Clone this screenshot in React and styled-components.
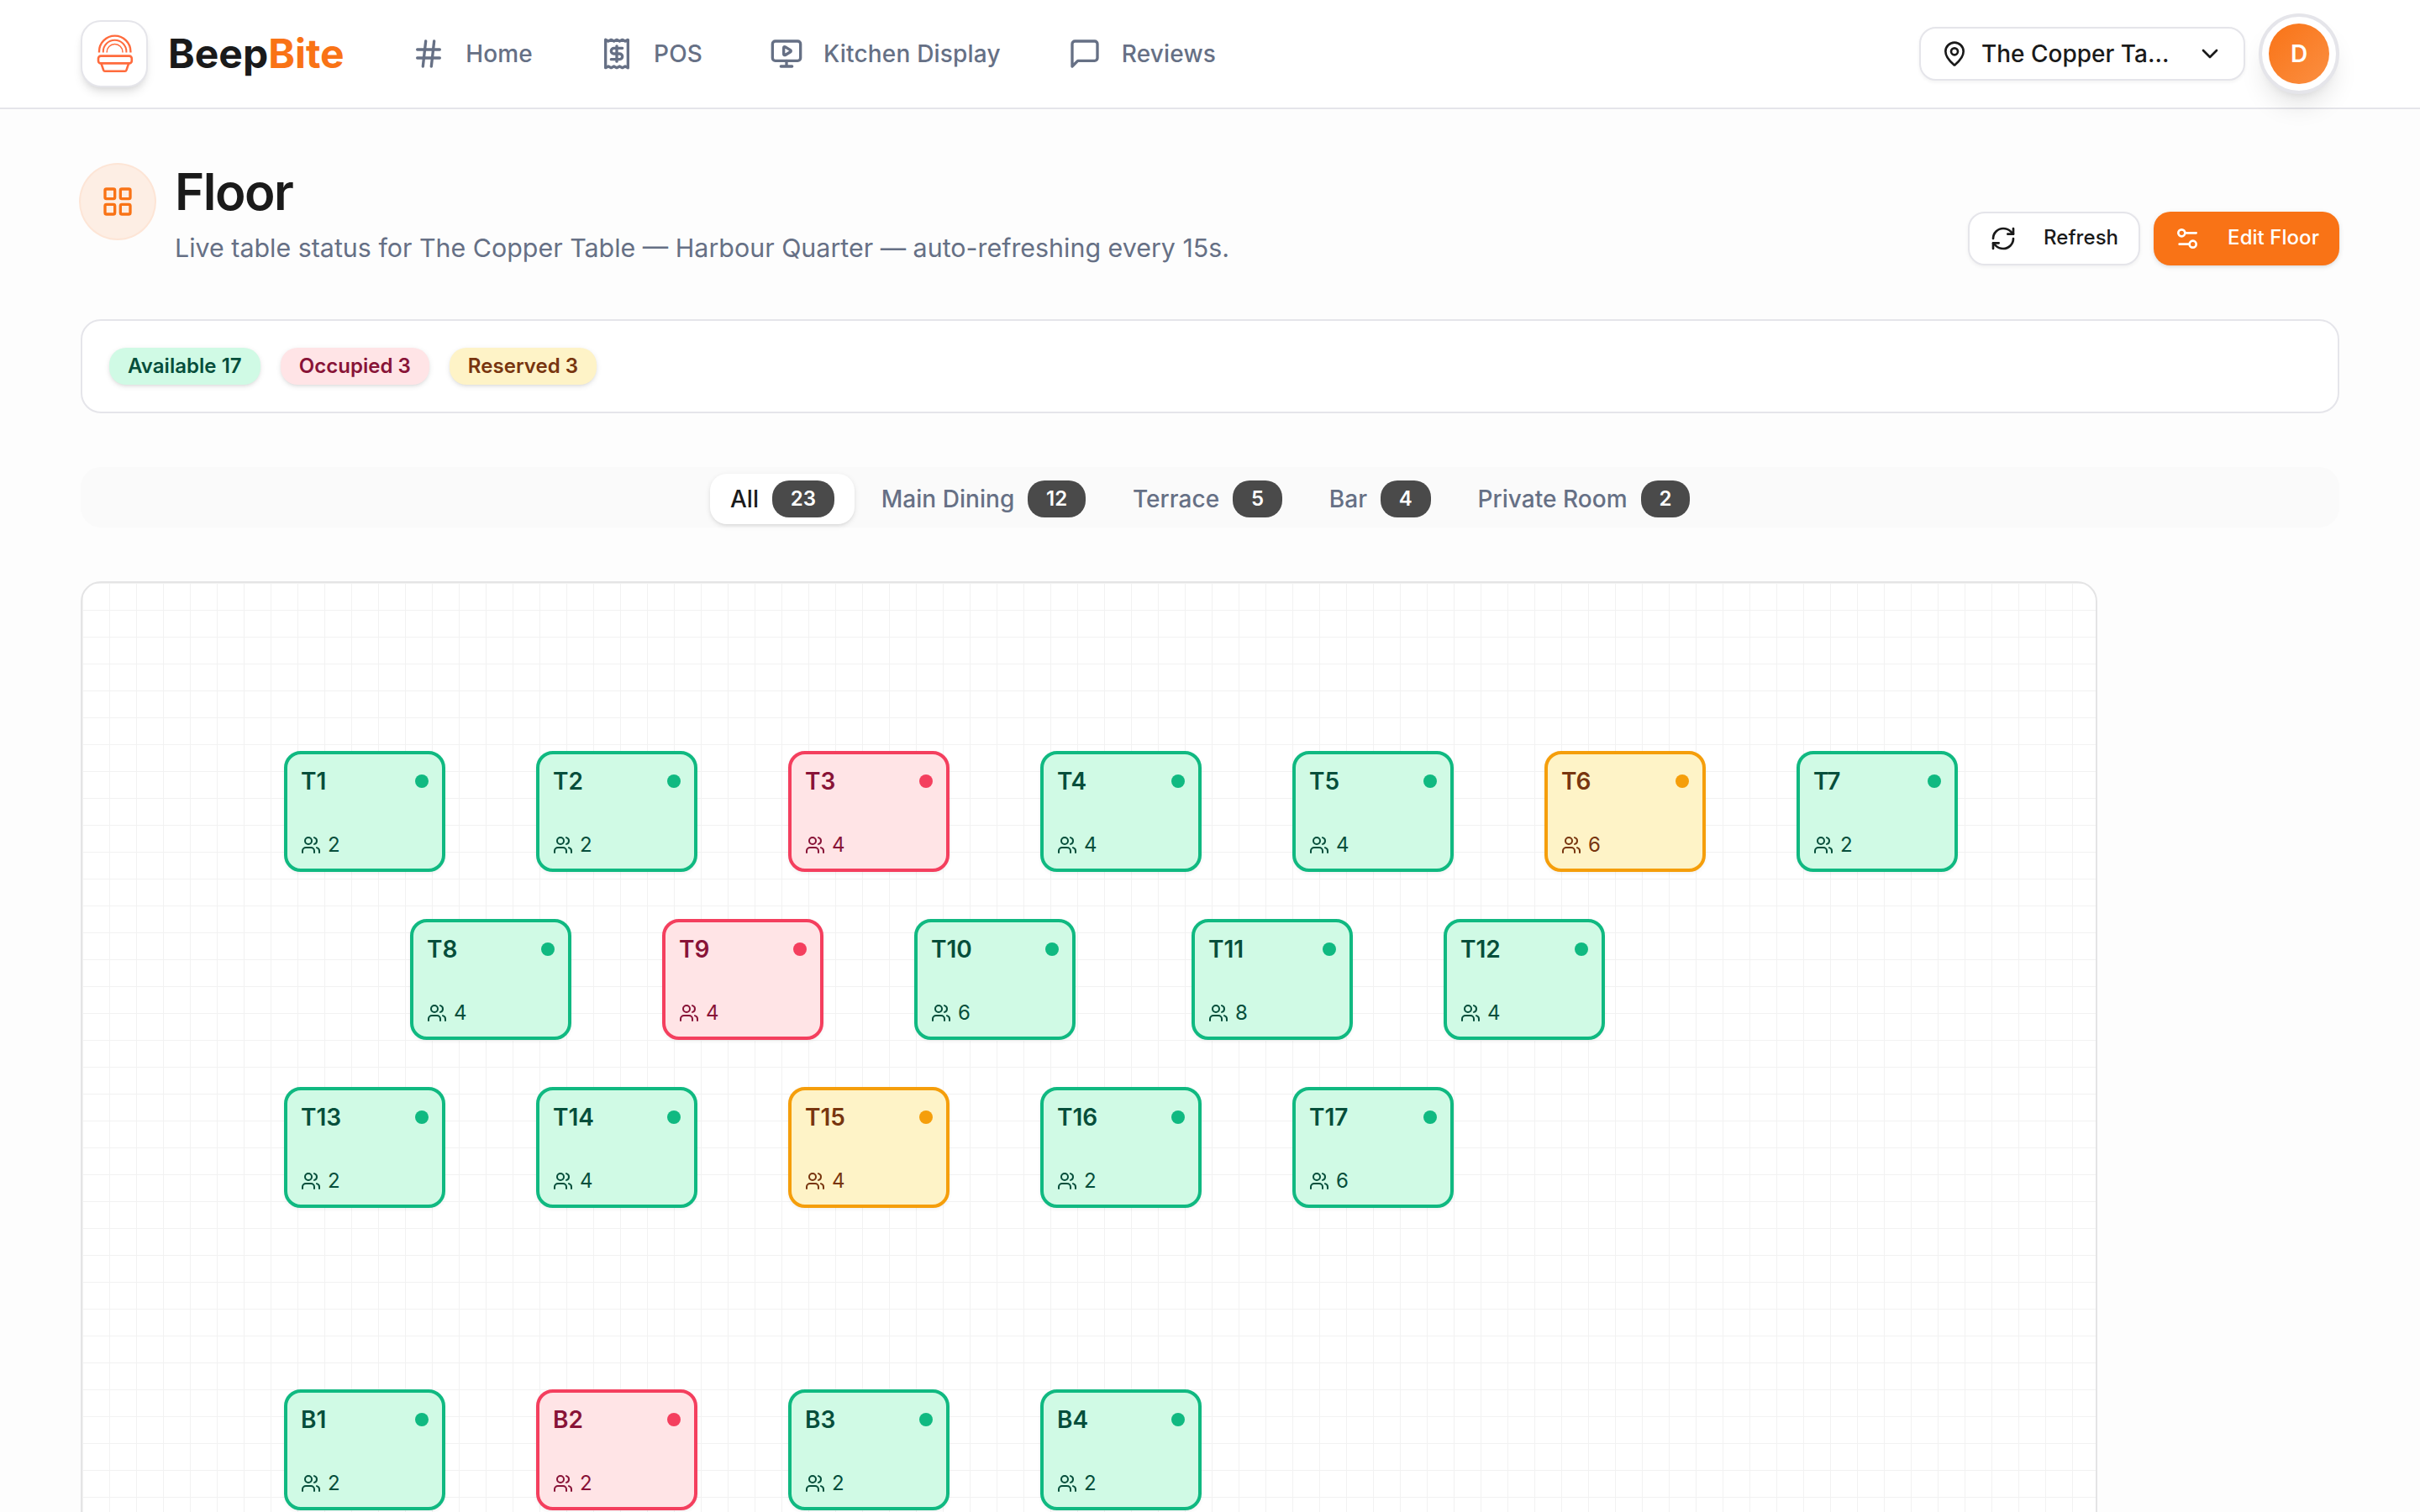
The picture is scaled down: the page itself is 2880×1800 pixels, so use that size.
import React, { useState } from "react";
import styled, { createGlobalStyle, css } from "styled-components";

const GlobalStyle = createGlobalStyle`
  * {
    box-sizing: border-box;
  }
  body {
    margin: 0;
    background: #fdfdfd;
    color: #1a1a1a;
    font-family: Inter, "Liberation Sans", sans-serif;
    -webkit-font-smoothing: antialiased;
  }
  button {
    font-family: inherit;
    cursor: pointer;
  }
`;

const STATUS = {
  available: { bg: "#d0fae5", border: "#10b981", text: "#064e3b" },
  occupied: { bg: "#ffe4e6", border: "#f43f5e", text: "#881337" },
  reserved: { bg: "#fef3c7", border: "#f59e0b", text: "#78350f" },
};

const Page = styled.div`
  height: 100vh;
  overflow: hidden;
`;

const Header = styled.header`
  display: flex;
  align-items: center;
  height: 130px;
  padding: 0 96px;
  background: #fff;
  border-bottom: 2px solid #e5e5ea;
`;

const LogoTile = styled.div`
  display: flex;
  align-items: center;
  justify-content: center;
  width: 80px;
  height: 80px;
  margin-right: 24px;
  border: 2px solid #e5e5ea;
  border-radius: 24px;
  background: #fff;
  box-shadow: 0 8px 12px -2px rgba(0, 0, 0, 0.1),
    0 4px 8px -4px rgba(0, 0, 0, 0.1);
`;

const Brand = styled.span`
  font-size: 48px;
  font-weight: 700;
  line-height: 64px;
  span {
    color: #f97316;
  }
`;

const Nav = styled.nav`
  display: flex;
  gap: 80px;
  margin-left: 80.5px;
`;

const NavItem = styled.a`
  display: flex;
  align-items: center;
  gap: 24px;
  color: #667085;
  font-size: 28px;
  font-weight: 500;
  line-height: 40px;
  letter-spacing: 0.18px;
`;

const HeaderRight = styled.div`
  display: flex;
  align-items: center;
  gap: 16px;
  margin-left: auto;
`;

const LocationSelect = styled.button`
  display: flex;
  align-items: center;
  gap: 16px;
  width: 388px;
  height: 64px;
  padding: 0 24px;
  border: 2px solid #e5e5ea;
  border-radius: 20px;
  background: #fff;
  color: #1a1a1a;
  font-size: 28px;
  font-weight: 500;
  box-shadow: 0 2px 4px rgba(0, 0, 0, 0.05);
  svg:last-child {
    margin-left: auto;
  }
`;

const AvatarRing = styled.div`
  display: flex;
  align-items: center;
  justify-content: center;
  width: 96px;
  height: 96px;
  border: 4px solid #e5e5ea;
  border-radius: 50%;
  background: #fff;
  box-shadow: 0 20px 30px -6px rgba(0, 0, 0, 0.1),
    0 8px 12px -8px rgba(0, 0, 0, 0.1);
`;

const Avatar = styled.div`
  display: flex;
  align-items: center;
  justify-content: center;
  width: 72px;
  height: 72px;
  border-radius: 50%;
  background: linear-gradient(135deg, #f97316, #fb8f42);
  color: #fff;
  font-size: 28px;
  font-weight: 600;
`;

const Main = styled.main`
  display: flex;
  flex-direction: column;
  padding: 62px 96px 0;
`;

const TitleRow = styled.div`
  display: flex;
  align-items: flex-end;
  justify-content: space-between;
  height: 124px;
`;

const TitleGroup = styled.div`
  display: flex;
  align-items: flex-start;
  gap: 24px;
  height: 100%;
`;

const TitleIcon = styled.div`
  display: flex;
  align-items: center;
  justify-content: center;
  width: 88px;
  height: 88px;
  margin-top: 4px;
  border-radius: 50%;
  background: #fdeee4;
  color: #f97316;
  box-shadow: 0 0 0 2px #fde5d6;
`;

const Title = styled.h1`
  margin: 0;
  font-size: 60px;
  font-weight: 600;
  line-height: 72px;
  letter-spacing: -1.5px;
`;

const Subtitle = styled.p`
  margin: 8px 0 0;
  color: #667085;
  font-size: 30.4px;
  line-height: 46px;
`;

const Actions = styled.div`
  display: flex;
  gap: 16px;
`;

const ActionButton = styled.button`
  display: flex;
  align-items: center;
  gap: 32px;
  height: 64px;
  padding: 0 24px;
  border: 2px solid #e5e5ea;
  border-radius: 20px;
  background: #fff;
  color: #1a1a1a;
  font-size: 24px;
  font-weight: 500;
  line-height: 32px;
  letter-spacing: 0.05px;
  box-shadow: 0 2px 4px rgba(0, 0, 0, 0.05);
  ${(props) =>
    props.$primary &&
    css`
      border: 0;
      background: #f97316;
      color: #fff;
      box-shadow: 0 2px 6px rgba(0, 0, 0, 0.1), 0 2px 4px -2px rgba(0, 0, 0, 0.1);
    `}
`;

const ActionLabel = styled.span`
  padding-bottom: 2px;
`;

const SummaryCard = styled.section`
  display: flex;
  gap: 24px;
  margin-top: 64px;
  padding: 32px;
  border: 2px solid #e5e5ea;
  border-radius: 24px;
  background: #fff;
`;

const StatusBadge = styled.span`
  height: 44px;
  padding: 0 22px;
  border-radius: 20px;
  background: ${(props) => STATUS[props.$status].bg};
  color: ${(props) => STATUS[props.$status].text};
  font-size: 24px;
  font-weight: 600;
  line-height: 44px;
  letter-spacing: 0.03px;
  box-shadow: 0 2px 6px rgba(0, 0, 0, 0.1), 0 2px 4px -2px rgba(0, 0, 0, 0.1);
`;

const Tabs = styled.div`
  display: flex;
  justify-content: center;
  gap: 8px;
  height: 72px;
  margin-top: 64px;
  padding-top: 8px;
  border-radius: 24px;
  background: #fafafa;
`;

const Tab = styled.button`
  display: flex;
  align-items: center;
  gap: 16px;
  height: 60px;
  padding: 0 24px;
  border: 0;
  border-radius: 20px;
  background: ${(props) => (props.$active ? "#fff" : "transparent")};
  color: ${(props) => (props.$active ? "#1a1a1a" : "#667085")};
  font-size: 28px;
  font-weight: 500;
  letter-spacing: 0.04px;
  box-shadow: ${(props) =>
    props.$active
      ? "0 2px 6px rgba(0, 0, 0, 0.1), 0 2px 4px -2px rgba(0, 0, 0, 0.1)"
      : "none"};
`;

const TabCount = styled.span`
  height: 44px;
  padding: 0 21.75px;
  border-radius: 20px;
  background: #4a4a4a;
  color: #fff;
  font-size: 24px;
  font-weight: 600;
  line-height: 44px;
  letter-spacing: 0;
`;

const FloorCanvas = styled.div`
  position: relative;
  width: 2400px;
  height: 1604px;
  margin-top: 64px;
  border: 2px solid #e4e4e5;
  border-radius: 24px;
  background-color: #fff;
  background-image: linear-gradient(to right, #f2f2f2 1px, transparent 1px),
    linear-gradient(to bottom, #f2f2f2 1px, transparent 1px);
  background-size: 32px 32px;
`;

const TableTile = styled.div`
  position: absolute;
  display: flex;
  flex-direction: column;
  justify-content: space-between;
  width: 192px;
  height: 144px;
  padding: 12px 16px;
  border: 4px solid ${(props) => STATUS[props.$status].border};
  border-radius: 20px;
  background: ${(props) => STATUS[props.$status].bg};
  color: ${(props) => STATUS[props.$status].text};
  box-shadow: 0 2px 4px rgba(0, 0, 0, 0.05);
`;

const TileTop = styled.div`
  display: flex;
  align-items: center;
  justify-content: space-between;
  font-size: 28px;
  font-weight: 600;
  line-height: 40px;
`;

const Dot = styled.span`
  width: 16px;
  height: 16px;
  border-radius: 50%;
  background: ${(props) => STATUS[props.$status].border};
`;

const Seats = styled.div`
  display: flex;
  align-items: center;
  gap: 8px;
  font-size: 24px;
  line-height: 32px;
`;

const StrokeSvg = styled.svg`
  flex-shrink: 0;
  fill: none;
  stroke: currentColor;
  stroke-width: 2;
  stroke-linecap: round;
  stroke-linejoin: round;
`;

const Icon = ({ size = 32, children }) => (
  <StrokeSvg width={size} height={size} viewBox="0 0 24 24">
    {children}
  </StrokeSvg>
);

const BurgerLogo = () => (
  <svg width="48" height="48" viewBox="0 0 48 48" fill="none" stroke="#ff6b3d">
    <path d="M6 22.5v-1.2a18.7 18.7 0 0 1 37.4 0v1.2" strokeWidth="2.4" />
    <path d="M10.8 22.5v-1a13.8 13.8 0 0 1 27.6 0v1" strokeWidth="2" />
    <path d="M15.2 22.5v-.6a9.4 9.4 0 0 1 18.8 0v.6" strokeWidth="1.5" />
    <rect x="5" y="26.6" width="39.8" height="8.8" rx="3" strokeWidth="2.6" />
    <path
      d="M8.4 35.4l2.8 8.2q.4 1.1 1.6 1.1h24q1.2 0 1.6-1.1l2.8-8.2"
      strokeWidth="2.6"
    />
  </svg>
);

const navItems = [
  {
    label: "Home",
    icon: <path d="M4 9h16M4 15h16M10 3 8 21M16 3l-2 18" />,
  },
  {
    label: "POS",
    icon: (
      <>
        <path d="M4 2v20l2-1 2 1 2-1 2 1 2-1 2 1 2-1 2 1V2l-2 1-2-1-2 1-2-1-2 1-2-1-2 1Z" />
        <path d="M16 8h-6a2 2 0 1 0 0 4h4a2 2 0 1 1 0 4H8" />
        <path d="M12 17.5v-11" />
      </>
    ),
  },
  {
    label: "Kitchen Display",
    icon: (
      <>
        <path d="M10 7.75a.75.75 0 0 1 1.142-.638l3.664 2.249a.75.75 0 0 1 0 1.278l-3.664 2.25a.75.75 0 0 1-1.142-.64z" />
        <path d="M12 17v4M8 21h8" />
        <rect x="2" y="3" width="20" height="14" rx="2" />
      </>
    ),
  },
  {
    label: "Reviews",
    icon: (
      <path d="M21 15a2 2 0 0 1-2 2H7l-4 4V5a2 2 0 0 1 2-2h14a2 2 0 0 1 2 2z" />
    ),
  },
];

const summary = [
  { status: "available", label: "Available 17" },
  { status: "occupied", label: "Occupied 3" },
  { status: "reserved", label: "Reserved 3" },
];

const sections = [
  { name: "All", count: 23 },
  { name: "Main Dining", count: 12 },
  { name: "Terrace", count: 5 },
  { name: "Bar", count: 4 },
  { name: "Private Room", count: 2 },
];

const tables = [
  { name: "T1", x: 240, y: 200, seats: 2, status: "available" },
  { name: "T2", x: 540, y: 200, seats: 2, status: "available" },
  { name: "T3", x: 840, y: 200, seats: 4, status: "occupied" },
  { name: "T4", x: 1140, y: 200, seats: 4, status: "available" },
  { name: "T5", x: 1440, y: 200, seats: 4, status: "available" },
  { name: "T6", x: 1740, y: 200, seats: 6, status: "reserved" },
  { name: "T7", x: 2040, y: 200, seats: 2, status: "available" },
  { name: "T8", x: 390, y: 400, seats: 4, status: "available" },
  { name: "T9", x: 690, y: 400, seats: 4, status: "occupied" },
  { name: "T10", x: 990, y: 400, seats: 6, status: "available" },
  { name: "T11", x: 1320, y: 400, seats: 8, status: "available" },
  { name: "T12", x: 1620, y: 400, seats: 4, status: "available" },
  { name: "T13", x: 240, y: 600, seats: 2, status: "available" },
  { name: "T14", x: 540, y: 600, seats: 4, status: "available" },
  { name: "T15", x: 840, y: 600, seats: 4, status: "reserved" },
  { name: "T16", x: 1140, y: 600, seats: 2, status: "available" },
  { name: "T17", x: 1440, y: 600, seats: 6, status: "available" },
  { name: "B1", x: 240, y: 960, seats: 2, status: "available" },
  { name: "B2", x: 540, y: 960, seats: 2, status: "occupied" },
  { name: "B3", x: 840, y: 960, seats: 2, status: "available" },
  { name: "B4", x: 1140, y: 960, seats: 2, status: "available" },
];

const FloorTable = ({ table }) => (
  <TableTile $status={table.status} style={{ left: table.x, top: table.y }}>
    <TileTop>
      {table.name}
      <Dot $status={table.status} />
    </TileTop>
    <Seats>
      <Icon size={24}>
        <path d="M16 21v-2a4 4 0 0 0-4-4H6a4 4 0 0 0-4 4v2" />
        <circle cx="9" cy="7" r="4" />
        <path d="M22 21v-2a4 4 0 0 0-3-3.87" />
        <path d="M16 3.13a4 4 0 0 1 0 7.75" />
      </Icon>
      {table.seats}
    </Seats>
  </TableTile>
);

const App = () => {
  const [section, setSection] = useState("All");

  return (
    <Page>
      <GlobalStyle />
      <Header>
        <LogoTile>
          <BurgerLogo />
        </LogoTile>
        <Brand>
          Beep<span>Bite</span>
        </Brand>
        <Nav>
          {navItems.map((item) => (
            <NavItem key={item.label}>
              <Icon size={40}>{item.icon}</Icon>
              {item.label}
            </NavItem>
          ))}
        </Nav>
        <HeaderRight>
          <LocationSelect>
            <Icon>
              <path d="M20 10c0 4.993-5.539 10.193-7.399 11.799a1 1 0 0 1-1.202 0C9.539 20.193 4 14.993 4 10a8 8 0 0 1 16 0" />
              <circle cx="12" cy="10" r="3" />
            </Icon>
            The Copper Ta...
            <Icon>
              <path d="m6 9 6 6 6-6" />
            </Icon>
          </LocationSelect>
          <AvatarRing>
            <Avatar>D</Avatar>
          </AvatarRing>
        </HeaderRight>
      </Header>
      <Main>
        <TitleRow>
          <TitleGroup>
            <TitleIcon>
              <Icon size={40}>
                <rect width="7" height="7" x="3" y="3" rx="1" />
                <rect width="7" height="7" x="14" y="3" rx="1" />
                <rect width="7" height="7" x="14" y="14" rx="1" />
                <rect width="7" height="7" x="3" y="14" rx="1" />
              </Icon>
            </TitleIcon>
            <div>
              <Title>Floor</Title>
              <Subtitle>
                Live table status for The Copper Table — Harbour Quarter —
                auto-refreshing every 15s.
              </Subtitle>
            </div>
          </TitleGroup>
          <Actions>
            <ActionButton>
              <Icon>
                <path d="M3 12a9 9 0 0 1 9-9 9.75 9.75 0 0 1 6.74 2.74L21 8" />
                <path d="M21 3v5h-5" />
                <path d="M21 12a9 9 0 0 1-9 9 9.75 9.75 0 0 1-6.74-2.74L3 16" />
                <path d="M8 16H3v5" />
              </Icon>
              <ActionLabel>Refresh</ActionLabel>
            </ActionButton>
            <ActionButton $primary>
              <Icon>
                <path d="M20 7h-9M14 17H5" />
                <circle cx="17" cy="17" r="3" />
                <circle cx="7" cy="7" r="3" />
              </Icon>
              <ActionLabel>Edit Floor</ActionLabel>
            </ActionButton>
          </Actions>
        </TitleRow>
        <SummaryCard>
          {summary.map((s) => (
            <StatusBadge key={s.status} $status={s.status}>
              {s.label}
            </StatusBadge>
          ))}
        </SummaryCard>
        <Tabs>
          {sections.map((s) => (
            <Tab
              key={s.name}
              $active={s.name === section}
              onClick={() => setSection(s.name)}
            >
              {s.name}
              <TabCount>{s.count}</TabCount>
            </Tab>
          ))}
        </Tabs>
        <FloorCanvas>
          {tables.map((t) => (
            <FloorTable key={t.name} table={t} />
          ))}
        </FloorCanvas>
      </Main>
    </Page>
  );
};

export default App;
